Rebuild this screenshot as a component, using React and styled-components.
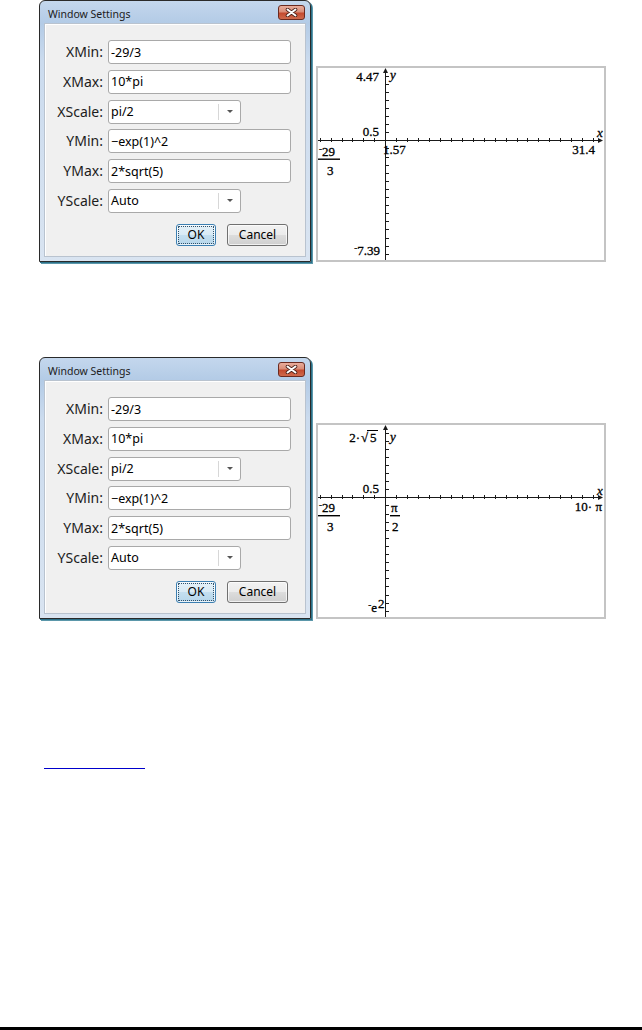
import React from 'react';
import styled, { createGlobalStyle } from 'styled-components';

// two "Window Settings" dialogs, each next to the graph they produce

const GlobalStyle = createGlobalStyle`
  html, body {
    margin: 0;
    padding: 0;
    background: #fff;
  }
  body {
    font-family: "Segoe UI", "Noto Sans", "Open Sans", sans-serif;
  }
`;

const Page = styled.div`
  height: 1030px;
  display: flex;
  flex-direction: column;
  background: #fff;
  overflow: hidden;
`;

const Figure = styled.div`
  display: flex;
  align-items: flex-end;
  padding-left: 39px;
  margin-top: ${p => p.$offset}px;
`;

const Dialog = styled.div`
  width: 272px;
  height: 262px;
  box-sizing: border-box;
  border: 1px solid #2a2a2a;
  border-radius: 6px 6px 0 0;
  box-shadow: 1px 1px 0 #2c7189, 2px 2px 0 #5b97aa;
  background: linear-gradient(to bottom, #c4d7ed 0, #b3cbe6 22px, #cbdbee 60px, #d9e4f1 100%);
  padding: 0 4px 4px 4px;
  display: flex;
  flex-direction: column;
`;

const TitleBar = styled.div`
  height: 22px;
  display: flex;
  align-items: flex-start;
  justify-content: space-between;
  padding-left: 4px;
  padding-right: 1px;
`;

const Title = styled.span`
  margin-top: 6px;
  font-size: 10.5px;
  line-height: 14px;
  color: #1b1b1b;
`;

const CloseButton = styled.div`
  margin-top: 4px;
  width: 27px;
  height: 15px;
  box-sizing: border-box;
  border: 1px solid #6b2a1f;
  border-radius: 3px;
  background: linear-gradient(to bottom, #e9ad9c 0%, #d98d78 45%, #c44a2f 55%, #cf6a4c 100%);
  display: flex;
  align-items: center;
  justify-content: center;
`;

const Panel = styled.div`
  flex: 1;
  background: #f0f0f0;
  border: 1px solid #b9c3cf;
  box-shadow: inset 1px 1px 0 #fff;
  display: flex;
  flex-direction: column;
`;

const Form = styled.div`
  display: grid;
  grid-template-columns: 58px 1fr;
  column-gap: 5px;
  row-gap: 5.8px;
  padding-top: 16px;
`;

const Label = styled.label`
  text-align: right;
  font-size: 14px;
  line-height: 24px;
  color: #1c1c1c;
`;

const TextField = styled.div`
  width: ${p => p.$w}px;
  height: 24px;
  box-sizing: border-box;
  border: 1px solid #a9a9a9;
  border-radius: 3px;
  background: #fff;
  display: flex;
  align-items: center;
`;

const FieldText = styled.span`
  flex: 1;
  padding-left: 2px;
  font-size: 12.5px;
  color: #000;
  white-space: nowrap;
`;

const DropButton = styled.span`
  width: 21px;
  height: 16px;
  border-left: 1px solid #d7d7d7;
  display: flex;
  align-items: center;
  justify-content: center;
`;

const Caret = styled.span`
  width: 0;
  height: 0;
  border-left: 3.5px solid transparent;
  border-right: 3.5px solid transparent;
  border-top: 3.5px solid #555;
`;

const ButtonRow = styled.div`
  display: flex;
  justify-content: flex-end;
  gap: 11px;
  margin-top: 11px;
  padding-right: 17px;
`;

const Button = styled.div`
  width: ${p => p.$w}px;
  height: 22px;
  box-sizing: border-box;
  border-radius: 3px;
  font-size: 12px;
  color: #000;
  display: flex;
  align-items: center;
  justify-content: center;
  border: 1px solid ${p => (p.$default ? '#3c7fb1' : '#707070')};
  background: ${p =>
    p.$default
      ? 'linear-gradient(to bottom, #e5f1f8 0%, #d8eaf5 50%, #c4dff0 50%, #b6d6ea 100%)'
      : 'linear-gradient(to bottom, #f2f2f2 0%, #ebebeb 50%, #dddddd 50%, #cfcfcf 100%)'};
  box-shadow: inset 0 0 0 1px rgba(255, 255, 255, 0.7);
  outline: ${p => (p.$default ? '1px dotted #30506a' : 'none')};
  outline-offset: -3px;
`;

const GraphBox = styled.div`
  width: 290px;
  height: 196px;
  box-sizing: border-box;
  border: 2px solid #c4c4c4;
  margin-left: 5px;
  background: #fff;
`;

const Plot = styled.svg`
  display: block;
`;

const Txt = styled.text`
  font-family: "Liberation Serif", "DejaVu Serif", serif;
  font-size: 13px;
  fill: #000;
  stroke: #000;
  stroke-width: 0.3px;
  font-style: ${p => (p.$italic ? 'italic' : 'normal')};
`;

const FootnoteRule = styled.div`
  width: 101px;
  height: 1px;
  margin: 149px 0 0 44px;
  background: #0000cc;
`;

const BottomBar = styled.div`
  margin-top: auto;
  height: 3px;
  background: #000;
`;

function CloseIcon() {
  const d = 'M2.5 1.5 L10.5 7.5 M10.5 1.5 L2.5 7.5';
  return (
    <svg width="13" height="9" viewBox="0 0 13 9">
      <path d={d} stroke="#4a2018" strokeWidth="3.6" strokeLinecap="round" fill="none" />
      <path d={d} stroke="#fff" strokeWidth="2" strokeLinecap="round" fill="none" />
    </svg>
  );
}

const fields = [
  { label: 'XMin:', value: '-29/3' },
  { label: 'XMax:', value: '10*pi' },
  { label: 'XScale:', value: 'pi/2', select: true },
  { label: 'YMin:', value: '\u2212exp(1)^2' },
  { label: 'YMax:', value: '2*sqrt(5)' },
  { label: 'YScale:', value: 'Auto', select: true },
];

function WindowSettings() {
  return (
    <Dialog>
      <TitleBar>
        <Title>Window Settings</Title>
        <CloseButton>
          <CloseIcon />
        </CloseButton>
      </TitleBar>
      <Panel>
        <Form>
          {fields.map(f => (
            <React.Fragment key={f.label}>
              <Label>{f.label}</Label>
              <TextField $w={f.select ? 133 : 183}>
                <FieldText>{f.value}</FieldText>
                {f.select && (
                  <DropButton>
                    <Caret />
                  </DropButton>
                )}
              </TextField>
            </React.Fragment>
          ))}
        </Form>
        <ButtonRow>
          <Button $w={40} $default>OK</Button>
          <Button $w={61}>Cancel</Button>
        </ButtonRow>
      </Panel>
    </Dialog>
  );
}

// plot area inside the 2px border
const W = 286;
const H = 192;
const XMIN = -29 / 3;
const XMAX = 10 * Math.PI;
const YMIN = -Math.exp(2);
const YMAX = 2 * Math.sqrt(5);

const sx = v => ((v - XMIN) / (XMAX - XMIN)) * W;
const sy = v => ((YMAX - v) / (YMAX - YMIN)) * H;

const X0 = Math.round(sx(0)) + 0.5;
const Y0 = Math.round(sy(0)) + 0.5;

function range(a, b) {
  const out = [];
  for (let i = a; i <= b; i++) if (i !== 0) out.push(i);
  return out;
}

function Graph({ children }) {
  const xt = range(-6, 19).map(k => Math.round(sx((k * Math.PI) / 2)) + 0.5);
  const yt = range(-14, 8).map(k => Math.round(sy(k * 0.5)) + 0.5);
  return (
    <GraphBox>
      <Plot width={W} height={H} viewBox={`0 0 ${W} ${H}`}>
        <g stroke="#1a1a1a" strokeWidth="1" shapeRendering="crispEdges">
          <line x1="0" y1={Y0} x2={W - 4} y2={Y0} />
          <line x1={X0} y1="2" x2={X0} y2={H} />
          {xt.map(x => (
            <line key={'x' + x} x1={x} y1={Y0 - 3} x2={x} y2={Y0 + 1} />
          ))}
          {yt.map(y => (
            <line key={'y' + y} x1={X0 - 1} y1={y} x2={X0 + 3} y2={y} />
          ))}
        </g>
        <path d={`M${W - 1} ${Y0} L${W - 6} ${Y0 - 2.5} L${W - 6} ${Y0 + 2.5} Z`} fill="#1a1a1a" />
        <path d={`M${X0} 0 L${X0 - 2.5} 5 L${X0 + 2.5} 5 Z`} fill="#1a1a1a" />
        {children}
      </Plot>
    </GraphBox>
  );
}

function Fraction({ x, top, bottom, barY, width, botX }) {
  return (
    <>
      <Txt x={x} y={barY - 3}>{top}</Txt>
      <rect x={x - 1} y={barY} width={width} height="1.4" fill="#000" />
      <Txt x={botX} y={barY + 16}>{bottom}</Txt>
    </>
  );
}

function NegTwentyNine() {
  return (
    <>
      <tspan fontSize="9" dy="-4">-</tspan>
      <tspan dy="4">29</tspan>
    </>
  );
}

function DecimalLabels() {
  return (
    <>
      <Txt x="61" y="13" textAnchor="end">4.47</Txt>
      <Txt x="72" y="11" $italic>y</Txt>
      <Txt x="61" y="68" textAnchor="end">0.5</Txt>
      <Txt x="279" y="69" $italic>x</Txt>
      <Fraction x={1} barY={90.5} width={22} botX={9} top={<NegTwentyNine />} bottom="3" />
      <Txt x="65" y="86">1.57</Txt>
      <Txt x="277" y="86" textAnchor="end">31.4</Txt>
      <Txt x="62" y="187" textAnchor="end">
        <tspan fontSize="9" dy="-4">-</tspan>
        <tspan dy="4">7.39</tspan>
      </Txt>
    </>
  );
}

function ExactLabels() {
  return (
    <>
      <Txt x="42" y="17" textAnchor="end">2·</Txt>
      <Txt x="43" y="17" fontSize="12">√</Txt>
      <rect x="49" y="5" width="11" height="1" fill="#000" />
      <Txt x="52" y="17">5</Txt>
      <Txt x="72" y="16" $italic>y</Txt>
      <Txt x="61" y="68" textAnchor="end">0.5</Txt>
      <Txt x="279" y="70" $italic>x</Txt>
      <Fraction x={1} barY={90} width={22} botX={9} top={<NegTwentyNine />} bottom="3" />
      <Fraction x={73} barY={90} width={10} botX={74} top="π" bottom="2" />
      <Txt x="284" y="86" textAnchor="end">10· π</Txt>
      <Txt x="59" y="187" textAnchor="end">
        <tspan fontSize="9" dy="-4">-</tspan>
        <tspan dy="4">e</tspan>
      </Txt>
      <Txt x="60" y="183">2</Txt>
    </>
  );
}

export default function App() {
  return (
    <Page>
      <GlobalStyle />
      <Figure $offset={0}>
        <WindowSettings />
        <Graph>
          <DecimalLabels />
        </Graph>
      </Figure>
      <Figure $offset={95}>
        <WindowSettings />
        <Graph>
          <ExactLabels />
        </Graph>
      </Figure>
      <FootnoteRule />
      <BottomBar />
    </Page>
  );
}
